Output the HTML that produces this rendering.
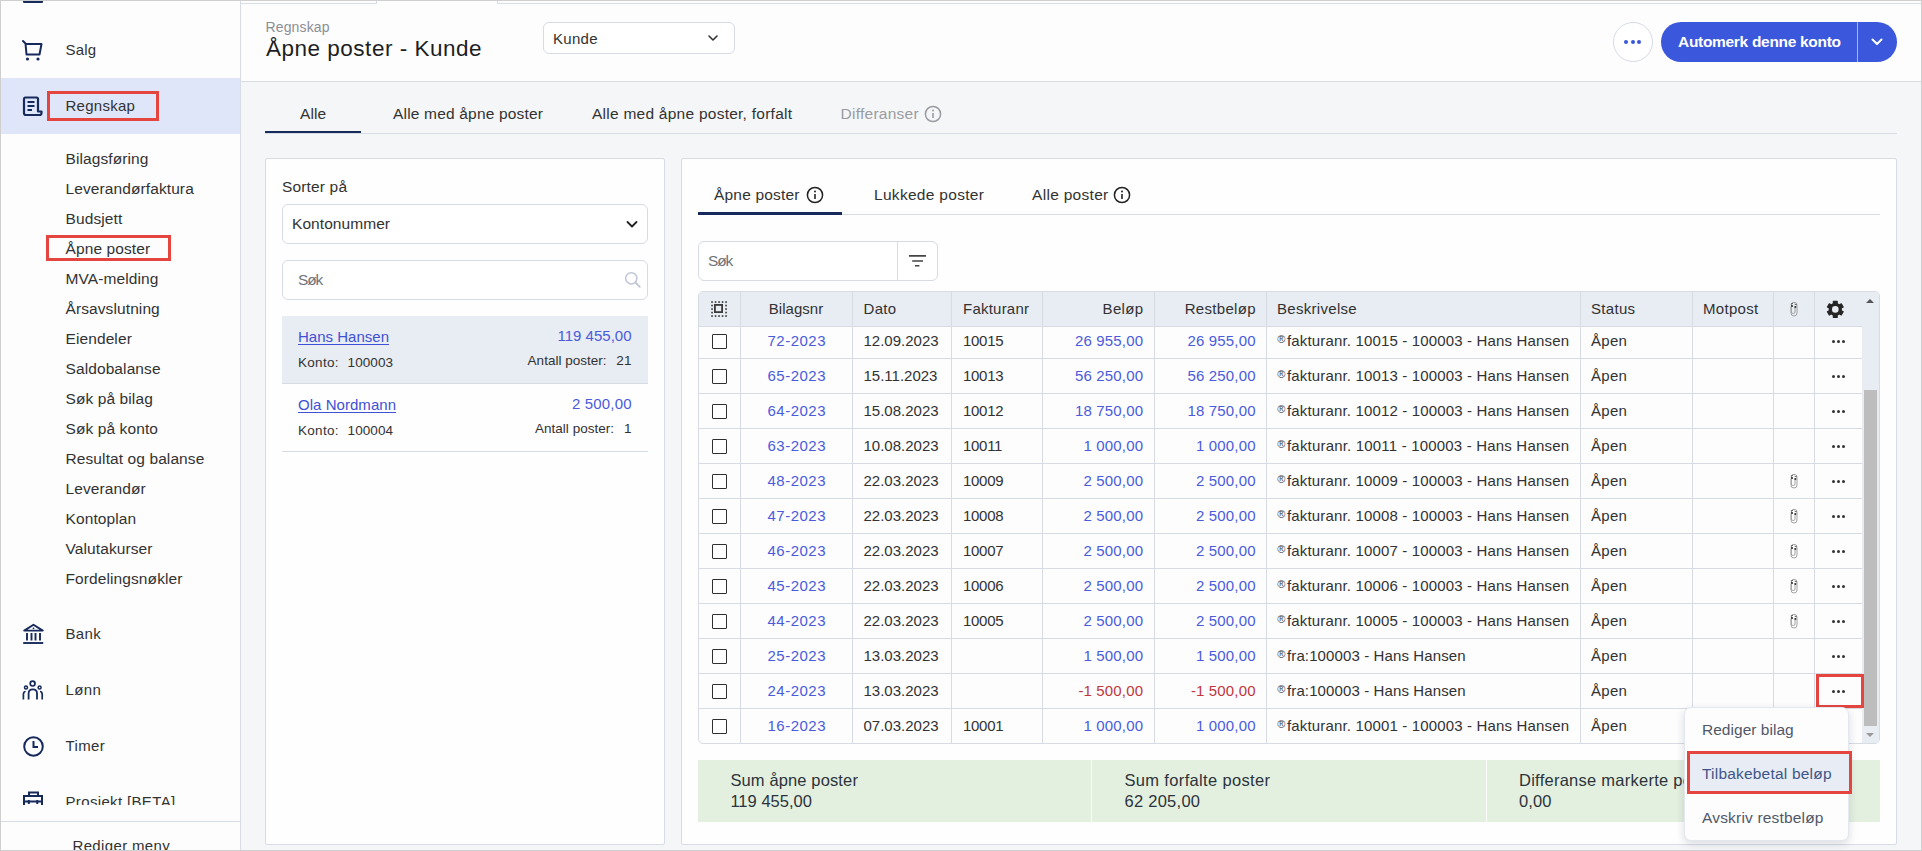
<!DOCTYPE html>
<html><head><meta charset="utf-8"><style>
html,body{margin:0;padding:0;}
body{width:1922px;height:851px;overflow:hidden;position:relative;font-family:"Liberation Sans", sans-serif;background:#f5f6f8;}
.t{position:absolute;white-space:nowrap;}
.b{position:absolute;}
</style></head><body>
<div class="b" style="left:0px;top:0px;width:1922px;height:851px;background:#f5f6f8"></div>
<div class="b" style="left:0px;top:0px;width:240px;height:851px;background:#fdfdfe"></div>
<div class="b" style="left:240px;top:0px;width:1px;height:851px;background:#d8dce4"></div>
<div class="b" style="left:241px;top:0px;width:1681px;height:81px;background:#fdfdfe"></div>
<div class="b" style="left:241px;top:81px;width:1681px;height:1px;background:#d8dce4"></div>
<div class="b" style="left:241px;top:3px;width:136px;height:1px;background:#d8dce4"></div>
<div class="b" style="left:497px;top:3px;width:1425px;height:1px;background:#d8dce4"></div>
<div class="b" style="left:376px;top:0px;width:1px;height:4px;background:#d8dce4"></div>
<div class="b" style="left:497px;top:0px;width:1px;height:4px;background:#d8dce4"></div>
<div class="b" style="left:23px;top:0px;width:20px;height:3px;background:#172a5c;border-radius:0 0 1px 1px"></div>
<div class="b" style="left:0px;top:78px;width:240px;height:56px;background:#dfe6fa"></div>
<svg class="b" style="left:21px;top:39px;" width="23" height="23" viewBox="0 0 23 23"><path d="M2 2 L4.5 4.5 L5.5 15.5 L18.5 15.5 L20.5 5 L4.8 5" fill="none" stroke="#172a5c" stroke-width="2" stroke-linejoin="round" stroke-linecap="round"/><circle cx="6.5" cy="20" r="1.6" fill="#172a5c"/><circle cx="17" cy="20" r="1.6" fill="#172a5c"/></svg>
<div class="t" style="top:42.10px;font-size:15px;line-height:15px;color:#323232;letter-spacing:0.159px;left:65.50px;">Salg</div>
<svg class="b" style="left:22px;top:95px;" width="23" height="23" viewBox="0 0 23 23"><path d="M3 2.5 H14.5 Q16 2.5 16 4 V16.5 H19.5 V18 Q19.5 20 17.5 20 H4 Q2 20 2 18 V4 Q2 2.5 3 2.5 Z" fill="none" stroke="#172a5c" stroke-width="2.2" stroke-linejoin="round"/><path d="M5.5 7 H12.5 M5.5 11 H12.5 M5.5 15 H10" stroke="#172a5c" stroke-width="2"/></svg>
<div class="t" style="top:98.00px;font-size:15px;line-height:15px;color:#323232;letter-spacing:0.265px;left:65.50px;">Regnskap</div>
<div class="b" style="left:47px;top:91px;width:112px;height:30px;border:3px solid #e4453e;box-sizing:border-box"></div>
<div class="t" style="top:151.08px;font-size:15.5px;line-height:15.5px;color:#323232;letter-spacing:0.100px;left:65.50px;">Bilagsføring</div>
<div class="t" style="top:181.08px;font-size:15.5px;line-height:15.5px;color:#323232;letter-spacing:0.100px;left:65.50px;">Leverandørfaktura</div>
<div class="t" style="top:211.08px;font-size:15.5px;line-height:15.5px;color:#323232;letter-spacing:0.100px;left:65.50px;">Budsjett</div>
<div class="t" style="top:241.08px;font-size:15.5px;line-height:15.5px;color:#323232;letter-spacing:0.100px;left:65.50px;">Åpne poster</div>
<div class="t" style="top:271.08px;font-size:15.5px;line-height:15.5px;color:#323232;letter-spacing:0.100px;left:65.50px;">MVA-melding</div>
<div class="t" style="top:301.08px;font-size:15.5px;line-height:15.5px;color:#323232;letter-spacing:0.100px;left:65.50px;">Årsavslutning</div>
<div class="t" style="top:331.08px;font-size:15.5px;line-height:15.5px;color:#323232;letter-spacing:0.100px;left:65.50px;">Eiendeler</div>
<div class="t" style="top:361.08px;font-size:15.5px;line-height:15.5px;color:#323232;letter-spacing:0.100px;left:65.50px;">Saldobalanse</div>
<div class="t" style="top:391.08px;font-size:15.5px;line-height:15.5px;color:#323232;letter-spacing:0.100px;left:65.50px;">Søk på bilag</div>
<div class="t" style="top:421.08px;font-size:15.5px;line-height:15.5px;color:#323232;letter-spacing:0.100px;left:65.50px;">Søk på konto</div>
<div class="t" style="top:451.08px;font-size:15.5px;line-height:15.5px;color:#323232;letter-spacing:0.100px;left:65.50px;">Resultat og balanse</div>
<div class="t" style="top:481.08px;font-size:15.5px;line-height:15.5px;color:#323232;letter-spacing:0.100px;left:65.50px;">Leverandør</div>
<div class="t" style="top:511.08px;font-size:15.5px;line-height:15.5px;color:#323232;letter-spacing:0.100px;left:65.50px;">Kontoplan</div>
<div class="t" style="top:541.08px;font-size:15.5px;line-height:15.5px;color:#323232;letter-spacing:0.100px;left:65.50px;">Valutakurser</div>
<div class="t" style="top:571.08px;font-size:15.5px;line-height:15.5px;color:#323232;letter-spacing:0.100px;left:65.50px;">Fordelingsnøkler</div>
<div class="b" style="left:46px;top:235px;width:125px;height:26px;border:3px solid #e4453e;box-sizing:border-box"></div>
<svg class="b" style="left:22px;top:622px;" width="23" height="23" viewBox="0 0 23 23"><path d="M2.2 8.6 L11.5 2.8 L20.8 8.6 Z" fill="none" stroke="#172a5c" stroke-width="1.9" stroke-linejoin="round"/><circle cx="11.5" cy="6.3" r="0.9" fill="#172a5c"/><path d="M5 11 V18.5 M9.5 11 V18.5 M13.5 11 V18.5 M18 11 V18.5" stroke="#172a5c" stroke-width="1.9"/><path d="M1.2 21 H21.2" stroke="#172a5c" stroke-width="1.9"/></svg>
<div class="t" style="top:625.80px;font-size:15px;line-height:15px;color:#323232;letter-spacing:0.350px;left:65.50px;">Bank</div>
<svg class="b" style="left:22px;top:680px;" width="23" height="23" viewBox="0 0 23 23"><circle cx="10.6" cy="3.6" r="2.4" fill="none" stroke="#172a5c" stroke-width="1.7"/><circle cx="4" cy="7.6" r="1.5" fill="none" stroke="#172a5c" stroke-width="1.5"/><circle cx="17.6" cy="7.6" r="1.5" fill="none" stroke="#172a5c" stroke-width="1.5"/><path d="M6.6 19.5 V13.5 Q6.6 9.3 10.8 9.3 Q15 9.3 15 13.5 V19.5" fill="none" stroke="#172a5c" stroke-width="1.8"/><path d="M1.4 19.5 V14.5 Q1.4 11.5 3.6 11.5" fill="none" stroke="#172a5c" stroke-width="1.7"/><path d="M20.2 19.5 V14.5 Q20.2 11.5 18 11.5" fill="none" stroke="#172a5c" stroke-width="1.7"/></svg>
<div class="t" style="top:681.80px;font-size:15px;line-height:15px;color:#323232;letter-spacing:0.350px;left:65.50px;">Lønn</div>
<svg class="b" style="left:22px;top:735px;" width="23" height="23" viewBox="0 0 23 23"><circle cx="11.5" cy="11.5" r="9.3" fill="none" stroke="#172a5c" stroke-width="2"/><path d="M11.5 6 V12 H16" fill="none" stroke="#172a5c" stroke-width="2"/></svg>
<div class="t" style="top:737.80px;font-size:15px;line-height:15px;color:#323232;letter-spacing:0.350px;left:65.50px;">Timer</div>
<div class="b" style="left:0;top:780px;width:240px;height:25px;overflow:hidden">
<svg class="b" style="left:22px;top:11px;" width="23" height="23" viewBox="0 0 23 23"><path d="M7 5 V1.5 H16 V5 M2 5 H20 V20 H2 Z M2 10.5 H20 M6.8 9 V13 M15.3 9 V13" fill="none" stroke="#172a5c" stroke-width="2"/></svg>
<div class="t" style="top:13.80px;font-size:15px;line-height:15px;color:#323232;letter-spacing:0.350px;left:65.50px;">Prosjekt [BETA]</div>
</div>
<div class="b" style="left:1px;top:821px;width:239px;height:1px;background:#d8dce4"></div>
<div class="t" style="top:838.30px;font-size:15px;line-height:15px;color:#323232;letter-spacing:0.350px;left:72.50px;">Rediger meny</div>
<div class="t" style="top:20.05px;font-size:14px;line-height:14px;color:#8b8e94;letter-spacing:0.137px;left:265.50px;">Regnskap</div>
<div class="t" style="top:38.15px;font-size:22.5px;line-height:22.5px;color:#1e1e1e;letter-spacing:0.506px;left:266.00px;">Åpne poster - Kunde</div>
<div class="b" style="left:543px;top:22px;width:192px;height:32px;border:1px solid #d6dbe4;border-radius:6px;background:#fff;box-sizing:border-box"></div>
<div class="t" style="top:30.50px;font-size:15px;line-height:15px;color:#323232;letter-spacing:0.300px;left:553.00px;">Kunde</div>
<svg class="b" style="left:706px;top:31px;" width="14" height="14" viewBox="0 0 14 14"><path d="M3 5 L7 9 L11 5" fill="none" stroke="#333" stroke-width="1.6" stroke-linecap="round" stroke-linejoin="round"/></svg>
<div class="b" style="left:1613px;top:22px;width:40px;height:40px;border:1px solid #d6dbe4;border-radius:50%;background:#fff;box-sizing:border-box"></div>
<div class="b" style="left:1624px;top:40px;width:4px;height:4px;background:#3b57db;border-radius:50%"></div>
<div class="b" style="left:1630.7px;top:40px;width:4px;height:4px;background:#3b57db;border-radius:50%"></div>
<div class="b" style="left:1637.4px;top:40px;width:4px;height:4px;background:#3b57db;border-radius:50%"></div>
<div class="b" style="left:1661px;top:22px;width:236px;height:40px;background:#3b57db;border-radius:20px"></div>
<div class="b" style="left:1857px;top:22px;width:1px;height:40px;background:#aab7f0"></div>
<div class="t" style="top:33.88px;font-size:15.5px;line-height:15.5px;color:#ffffff;font-weight:bold;letter-spacing:-0.305px;left:1678.00px;">Automerk denne konto</div>
<svg class="b" style="left:1870px;top:35px;" width="14" height="14" viewBox="0 0 14 14"><path d="M2.5 4.5 L7 9 L11.5 4.5" fill="none" stroke="#fff" stroke-width="2" stroke-linecap="round" stroke-linejoin="round"/></svg>
<div class="b" style="left:265px;top:133px;width:1632px;height:1px;background:#d8dce4"></div>
<div class="b" style="left:265px;top:131px;width:96px;height:2px;background:#172a5c"></div>
<div class="t" style="top:106.28px;font-size:15.5px;line-height:15.5px;color:#323232;letter-spacing:0.051px;left:300.00px;">Alle</div>
<div class="t" style="top:106.28px;font-size:15.5px;line-height:15.5px;color:#323232;letter-spacing:0.185px;left:393.00px;">Alle med åpne poster</div>
<div class="t" style="top:106.28px;font-size:15.5px;line-height:15.5px;color:#323232;letter-spacing:0.250px;left:592.00px;">Alle med åpne poster, forfalt</div>
<div class="t" style="top:106.28px;font-size:15.5px;line-height:15.5px;color:#9a9ca2;letter-spacing:0.248px;left:840.60px;">Differanser</div>
<svg class="b" style="left:924px;top:105px;" width="18" height="18" viewBox="0 0 18 18"><circle cx="9" cy="9" r="7.6" fill="none" stroke="#9a9ca2" stroke-width="1.5"/><circle cx="9" cy="5.4" r="1" fill="#9a9ca2"/><path d="M9 8 V13" stroke="#9a9ca2" stroke-width="1.6"/></svg>
<div class="b" style="left:265px;top:158px;width:400px;height:687px;background:#fefefe;border:1px solid #d8dce4;border-radius:2px;box-sizing:border-box"></div>
<div class="t" style="top:178.88px;font-size:15.5px;line-height:15.5px;color:#323232;letter-spacing:0.156px;left:282.00px;">Sorter på</div>
<div class="b" style="left:282px;top:204px;width:366px;height:40px;background:#fff;border:1px solid #d6dbe4;border-radius:6px;box-sizing:border-box"></div>
<div class="t" style="top:216.38px;font-size:15.5px;line-height:15.5px;color:#323232;letter-spacing:0.065px;left:292.00px;">Kontonummer</div>
<svg class="b" style="left:624px;top:216px;" width="16" height="16" viewBox="0 0 16 16"><path d="M3.5 6 L8 10.5 L12.5 6" fill="none" stroke="#222" stroke-width="1.8" stroke-linecap="round" stroke-linejoin="round"/></svg>
<div class="b" style="left:282px;top:260px;width:366px;height:40px;background:#fff;border:1px solid #d6dbe4;border-radius:6px;box-sizing:border-box"></div>
<div class="t" style="top:272.38px;font-size:15.5px;line-height:15.5px;color:#6f7178;letter-spacing:-1.179px;left:298.00px;">Søk</div>
<svg class="b" style="left:623.5px;top:271px;" width="18" height="18" viewBox="0 0 18 18"><circle cx="7.3" cy="7.3" r="5.6" fill="none" stroke="#c0c6d6" stroke-width="1.5"/><path d="M11.5 11.5 L15.8 15.8" stroke="#c0c6d6" stroke-width="1.8" stroke-linecap="round"/></svg>
<div class="b" style="left:282px;top:316px;width:366px;height:67px;background:#e8ecf3"></div>
<div class="b" style="left:282px;top:383px;width:366px;height:1px;background:#d6dbe4"></div>
<div class="b" style="left:282px;top:451px;width:366px;height:1px;background:#d6dbe4"></div>
<div class="t" style="top:329.00px;font-size:15px;line-height:15px;color:#3f51d6;letter-spacing:0.011px;left:298.00px;text-decoration:underline;text-underline-offset:2px">Hans Hansen</div>
<div class="t" style="top:328.20px;font-size:15px;line-height:15px;color:#4a5bdc;letter-spacing:0.005px;left:557.50px;">119 455,00</div>
<div class="t" style="top:355.57px;font-size:13.5px;line-height:13.5px;color:#323232;letter-spacing:0.300px;left:298.00px;">Konto:</div>
<div class="t" style="top:355.57px;font-size:13.5px;line-height:13.5px;color:#323232;letter-spacing:0.071px;left:347.60px;">100003</div>
<div class="t" style="top:353.57px;font-size:13.5px;line-height:13.5px;color:#323232;letter-spacing:0.016px;left:527.60px;">Antall poster:</div>
<div class="t" style="top:353.57px;font-size:13.5px;line-height:13.5px;color:#323232;letter-spacing:0.300px;left:616.18px;">21</div>
<div class="t" style="top:396.70px;font-size:15px;line-height:15px;color:#3f51d6;letter-spacing:0.041px;left:298.00px;text-decoration:underline;text-underline-offset:2px">Ola Nordmann</div>
<div class="t" style="top:395.90px;font-size:15px;line-height:15px;color:#4a5bdc;letter-spacing:0.159px;left:572.00px;">2 500,00</div>
<div class="t" style="top:423.77px;font-size:13.5px;line-height:13.5px;color:#323232;letter-spacing:0.300px;left:298.00px;">Konto:</div>
<div class="t" style="top:423.77px;font-size:13.5px;line-height:13.5px;color:#323232;letter-spacing:0.071px;left:347.60px;">100004</div>
<div class="t" style="top:421.57px;font-size:13.5px;line-height:13.5px;color:#323232;letter-spacing:0.016px;left:535.00px;">Antall poster:</div>
<div class="t" style="top:421.57px;font-size:13.5px;line-height:13.5px;color:#323232;left:623.99px;">1</div>
<div class="b" style="left:681px;top:158px;width:1216px;height:687px;background:#fefefe;border:1px solid #d8dce4;border-radius:2px;box-sizing:border-box"></div>
<div class="b" style="left:698px;top:214px;width:1182px;height:1px;background:#d8dce4"></div>
<div class="b" style="left:698px;top:212px;width:144px;height:2.5px;background:#172a5c"></div>
<div class="t" style="top:187.48px;font-size:15.5px;line-height:15.5px;color:#323232;letter-spacing:0.192px;left:714.00px;">Åpne poster</div>
<svg class="b" style="left:806px;top:186px;" width="18" height="18" viewBox="0 0 18 18"><circle cx="9" cy="9" r="7.6" fill="none" stroke="#222" stroke-width="1.5"/><circle cx="9" cy="5.4" r="1" fill="#222"/><path d="M9 8 V13" stroke="#222" stroke-width="1.6"/></svg>
<div class="t" style="top:187.48px;font-size:15.5px;line-height:15.5px;color:#323232;letter-spacing:0.300px;left:874.00px;">Lukkede poster</div>
<div class="t" style="top:187.48px;font-size:15.5px;line-height:15.5px;color:#323232;letter-spacing:0.300px;left:1032.00px;">Alle poster</div>
<svg class="b" style="left:1113px;top:186px;" width="18" height="18" viewBox="0 0 18 18"><circle cx="9" cy="9" r="7.6" fill="none" stroke="#222" stroke-width="1.5"/><circle cx="9" cy="5.4" r="1" fill="#222"/><path d="M9 8 V13" stroke="#222" stroke-width="1.6"/></svg>
<div class="b" style="left:698px;top:241px;width:240px;height:40px;background:#fff;border:1px solid #d6dbe4;border-radius:6px;box-sizing:border-box"></div>
<div class="b" style="left:897px;top:241px;width:1px;height:40px;background:#d6dbe4"></div>
<div class="t" style="top:253.38px;font-size:15.5px;line-height:15.5px;color:#6f7178;letter-spacing:-1.179px;left:708.00px;">Søk</div>
<svg class="b" style="left:907px;top:251px;" width="20" height="20" viewBox="0 0 20 20"><path d="M2 4.9 H19 M5.2 10 H16 M8 14.7 H12.4" stroke="#444" stroke-width="1.6"/></svg>
<div class="b" style="left:698px;top:291px;width:1182px;height:453px;border:1px solid #d6dbe4;border-radius:5px;box-sizing:border-box;overflow:hidden;background:#fdfdfe">
</div>
<div class="b" style="left:699px;top:292px;width:1163px;height:34px;background:#e8ecf3;border-radius:4px 0 0 0"></div>
<div class="b" style="left:1862px;top:292px;width:17px;height:451px;background:#e8ecf3"></div>
<div class="b" style="left:1864px;top:390px;width:13px;height:336px;background:#bdbdbd"></div>
<svg class="b" style="left:1865px;top:297px;" width="10" height="8" viewBox="0 0 10 8"><path d="M1 6 L5 2 L9 6 Z" fill="#555"/></svg>
<svg class="b" style="left:1865px;top:731px;" width="10" height="8" viewBox="0 0 10 8"><path d="M1 2 L5 6 L9 2 Z" fill="#999"/></svg>
<div class="b" style="left:699px;top:326px;width:1163px;height:1px;background:#d6dbe4"></div>
<div class="b" style="left:740px;top:292px;width:1px;height:451px;background:#d6dbe4"></div>
<div class="b" style="left:852px;top:292px;width:1px;height:451px;background:#d6dbe4"></div>
<div class="b" style="left:951px;top:292px;width:1px;height:451px;background:#d6dbe4"></div>
<div class="b" style="left:1042px;top:292px;width:1px;height:451px;background:#d6dbe4"></div>
<div class="b" style="left:1154px;top:292px;width:1px;height:451px;background:#d6dbe4"></div>
<div class="b" style="left:1266px;top:292px;width:1px;height:451px;background:#d6dbe4"></div>
<div class="b" style="left:1580px;top:292px;width:1px;height:451px;background:#d6dbe4"></div>
<div class="b" style="left:1692px;top:292px;width:1px;height:451px;background:#d6dbe4"></div>
<div class="b" style="left:1773px;top:292px;width:1px;height:451px;background:#d6dbe4"></div>
<div class="b" style="left:1814px;top:292px;width:1px;height:451px;background:#d6dbe4"></div>
<div class="t" style="top:301.30px;font-size:15px;line-height:15px;color:#323232;letter-spacing:0.015px;left:768.85px;">Bilagsnr</div>
<div class="t" style="top:301.30px;font-size:15px;line-height:15px;color:#323232;letter-spacing:0.300px;left:863.50px;">Dato</div>
<div class="t" style="top:301.30px;font-size:15px;line-height:15px;color:#323232;letter-spacing:0.226px;left:963.00px;">Fakturanr</div>
<div class="t" style="top:301.30px;font-size:15px;line-height:15px;color:#323232;letter-spacing:0.300px;left:1102.62px;">Beløp</div>
<div class="t" style="top:301.30px;font-size:15px;line-height:15px;color:#323232;letter-spacing:0.300px;left:1184.74px;">Restbeløp</div>
<div class="t" style="top:301.30px;font-size:15px;line-height:15px;color:#323232;letter-spacing:0.300px;left:1277.00px;">Beskrivelse</div>
<div class="t" style="top:301.30px;font-size:15px;line-height:15px;color:#323232;letter-spacing:0.300px;left:1591.00px;">Status</div>
<div class="t" style="top:301.30px;font-size:15px;line-height:15px;color:#323232;letter-spacing:0.300px;left:1703.00px;">Motpost</div>
<svg class="b" style="left:711.3px;top:301.3px;" width="16" height="16" viewBox="0 0 16 16"><rect x="0.25" y="0.25" width="1.6" height="1.6" fill="#333"/><rect x="0.25" y="14.25" width="1.6" height="1.6" fill="#333"/><rect x="3.75" y="0.25" width="1.6" height="1.6" fill="#333"/><rect x="3.75" y="14.25" width="1.6" height="1.6" fill="#333"/><rect x="7.25" y="0.25" width="1.6" height="1.6" fill="#333"/><rect x="7.25" y="14.25" width="1.6" height="1.6" fill="#333"/><rect x="10.75" y="0.25" width="1.6" height="1.6" fill="#333"/><rect x="10.75" y="14.25" width="1.6" height="1.6" fill="#333"/><rect x="14.25" y="0.25" width="1.6" height="1.6" fill="#333"/><rect x="14.25" y="14.25" width="1.6" height="1.6" fill="#333"/><rect x="0.25" y="3.75" width="1.6" height="1.6" fill="#333"/><rect x="14.25" y="3.75" width="1.6" height="1.6" fill="#333"/><rect x="0.25" y="7.25" width="1.6" height="1.6" fill="#333"/><rect x="14.25" y="7.25" width="1.6" height="1.6" fill="#333"/><rect x="0.25" y="10.75" width="1.6" height="1.6" fill="#333"/><rect x="14.25" y="10.75" width="1.6" height="1.6" fill="#333"/><rect x="3.9" y="3.9" width="7.2" height="7.2" fill="none" stroke="#3a3a3a" stroke-width="1.8"/></svg>
<svg class="b" style="left:1825px;top:299px;" width="21" height="21" viewBox="0 0 21 21"><g transform="translate(10.3,10.4)"><circle r="6.6" fill="#262626"/><rect x="-2.5" y="-8.6" width="5" height="17.2" rx="0.6" fill="#262626"/><rect x="-2.5" y="-8.6" width="5" height="17.2" rx="0.6" fill="#262626" transform="rotate(60)"/><rect x="-2.5" y="-8.6" width="5" height="17.2" rx="0.6" fill="#262626" transform="rotate(120)"/><circle r="3.3" fill="#e8ecf3"/></g></svg>
<svg class="b" style="left:1789px;top:301px;" width="10" height="16" viewBox="0 0 10 16"><path d="M2 6 V12 Q2 15 5 15 Q8 15 8 12 V4 Q8 1.3 5 1.3 Q2.3 1.3 2.3 4 V11 Q2.3 12.5 4.5 12.5 Q6 12.5 6 11 V7" fill="none" stroke="#9a9a9a" stroke-width="0.9"/><circle cx="3" cy="5" r="1.1" fill="#333"/><circle cx="6.3" cy="6" r="1.1" fill="#333"/><path d="M1.8 3 L4 2.4 M5.6 3.2 L7.8 3.8" stroke="#444" stroke-width="0.8"/></svg>
<div class="b" style="left:712px;top:333.8px;width:15.3px;height:15.3px;border:1.6px solid #2f2f2f;border-radius:1px;box-sizing:border-box;background:#fff"></div>
<div class="t" style="top:333.00px;font-size:15px;line-height:15px;color:#4a5bdc;letter-spacing:0.500px;left:767.48px;">72-2023</div>
<div class="t" style="top:333.00px;font-size:15px;line-height:15px;color:#323232;left:863.50px;">12.09.2023</div>
<div class="t" style="top:333.00px;font-size:15px;line-height:15px;color:#323232;letter-spacing:-0.300px;left:963.00px;">10015</div>
<div class="t" style="top:333.00px;font-size:15px;line-height:15px;color:#4a5bdc;letter-spacing:0.150px;left:1075.07px;">26 955,00</div>
<div class="t" style="top:333.00px;font-size:15px;line-height:15px;color:#4a5bdc;letter-spacing:0.150px;left:1187.57px;">26 955,00</div>
<div class="t" style="top:333.79px;font-size:11px;line-height:11px;color:#444;left:1277.30px;">®</div>
<div class="t" style="top:333.00px;font-size:15px;line-height:15px;color:#323232;letter-spacing:0.158px;left:1287.00px;">fakturanr. 10015 - 100003 - Hans Hansen</div>
<div class="t" style="top:333.00px;font-size:15px;line-height:15px;color:#323232;letter-spacing:0.300px;left:1591.00px;">Åpen</div>
<div class="b" style="left:1831.5px;top:339.5px;width:3px;height:3px;background:#333;border-radius:50%"></div>
<div class="b" style="left:1836.5px;top:339.5px;width:3px;height:3px;background:#333;border-radius:50%"></div>
<div class="b" style="left:1841.5px;top:339.5px;width:3px;height:3px;background:#333;border-radius:50%"></div>
<div class="b" style="left:699px;top:358px;width:1163px;height:1px;background:#d6dbe4"></div>
<div class="b" style="left:712px;top:368.8px;width:15.3px;height:15.3px;border:1.6px solid #2f2f2f;border-radius:1px;box-sizing:border-box;background:#fff"></div>
<div class="t" style="top:368.00px;font-size:15px;line-height:15px;color:#4a5bdc;letter-spacing:0.500px;left:767.48px;">65-2023</div>
<div class="t" style="top:368.00px;font-size:15px;line-height:15px;color:#323232;left:863.50px;">15.11.2023</div>
<div class="t" style="top:368.00px;font-size:15px;line-height:15px;color:#323232;letter-spacing:-0.300px;left:963.00px;">10013</div>
<div class="t" style="top:368.00px;font-size:15px;line-height:15px;color:#4a5bdc;letter-spacing:0.150px;left:1075.07px;">56 250,00</div>
<div class="t" style="top:368.00px;font-size:15px;line-height:15px;color:#4a5bdc;letter-spacing:0.150px;left:1187.57px;">56 250,00</div>
<div class="t" style="top:368.79px;font-size:11px;line-height:11px;color:#444;left:1277.30px;">®</div>
<div class="t" style="top:368.00px;font-size:15px;line-height:15px;color:#323232;letter-spacing:0.158px;left:1287.00px;">fakturanr. 10013 - 100003 - Hans Hansen</div>
<div class="t" style="top:368.00px;font-size:15px;line-height:15px;color:#323232;letter-spacing:0.300px;left:1591.00px;">Åpen</div>
<div class="b" style="left:1831.5px;top:374.5px;width:3px;height:3px;background:#333;border-radius:50%"></div>
<div class="b" style="left:1836.5px;top:374.5px;width:3px;height:3px;background:#333;border-radius:50%"></div>
<div class="b" style="left:1841.5px;top:374.5px;width:3px;height:3px;background:#333;border-radius:50%"></div>
<div class="b" style="left:699px;top:393px;width:1163px;height:1px;background:#d6dbe4"></div>
<div class="b" style="left:712px;top:403.8px;width:15.3px;height:15.3px;border:1.6px solid #2f2f2f;border-radius:1px;box-sizing:border-box;background:#fff"></div>
<div class="t" style="top:403.00px;font-size:15px;line-height:15px;color:#4a5bdc;letter-spacing:0.500px;left:767.48px;">64-2023</div>
<div class="t" style="top:403.00px;font-size:15px;line-height:15px;color:#323232;left:863.50px;">15.08.2023</div>
<div class="t" style="top:403.00px;font-size:15px;line-height:15px;color:#323232;letter-spacing:-0.300px;left:963.00px;">10012</div>
<div class="t" style="top:403.00px;font-size:15px;line-height:15px;color:#4a5bdc;letter-spacing:0.150px;left:1075.07px;">18 750,00</div>
<div class="t" style="top:403.00px;font-size:15px;line-height:15px;color:#4a5bdc;letter-spacing:0.150px;left:1187.57px;">18 750,00</div>
<div class="t" style="top:403.79px;font-size:11px;line-height:11px;color:#444;left:1277.30px;">®</div>
<div class="t" style="top:403.00px;font-size:15px;line-height:15px;color:#323232;letter-spacing:0.158px;left:1287.00px;">fakturanr. 10012 - 100003 - Hans Hansen</div>
<div class="t" style="top:403.00px;font-size:15px;line-height:15px;color:#323232;letter-spacing:0.300px;left:1591.00px;">Åpen</div>
<div class="b" style="left:1831.5px;top:409.5px;width:3px;height:3px;background:#333;border-radius:50%"></div>
<div class="b" style="left:1836.5px;top:409.5px;width:3px;height:3px;background:#333;border-radius:50%"></div>
<div class="b" style="left:1841.5px;top:409.5px;width:3px;height:3px;background:#333;border-radius:50%"></div>
<div class="b" style="left:699px;top:428px;width:1163px;height:1px;background:#d6dbe4"></div>
<div class="b" style="left:712px;top:438.8px;width:15.3px;height:15.3px;border:1.6px solid #2f2f2f;border-radius:1px;box-sizing:border-box;background:#fff"></div>
<div class="t" style="top:438.00px;font-size:15px;line-height:15px;color:#4a5bdc;letter-spacing:0.500px;left:767.48px;">63-2023</div>
<div class="t" style="top:438.00px;font-size:15px;line-height:15px;color:#323232;left:863.50px;">10.08.2023</div>
<div class="t" style="top:438.00px;font-size:15px;line-height:15px;color:#323232;letter-spacing:-0.300px;left:963.00px;">10011</div>
<div class="t" style="top:438.00px;font-size:15px;line-height:15px;color:#4a5bdc;letter-spacing:0.150px;left:1083.56px;">1 000,00</div>
<div class="t" style="top:438.00px;font-size:15px;line-height:15px;color:#4a5bdc;letter-spacing:0.150px;left:1196.06px;">1 000,00</div>
<div class="t" style="top:438.79px;font-size:11px;line-height:11px;color:#444;left:1277.30px;">®</div>
<div class="t" style="top:438.00px;font-size:15px;line-height:15px;color:#323232;letter-spacing:0.187px;left:1287.00px;">fakturanr. 10011 - 100003 - Hans Hansen</div>
<div class="t" style="top:438.00px;font-size:15px;line-height:15px;color:#323232;letter-spacing:0.300px;left:1591.00px;">Åpen</div>
<div class="b" style="left:1831.5px;top:444.5px;width:3px;height:3px;background:#333;border-radius:50%"></div>
<div class="b" style="left:1836.5px;top:444.5px;width:3px;height:3px;background:#333;border-radius:50%"></div>
<div class="b" style="left:1841.5px;top:444.5px;width:3px;height:3px;background:#333;border-radius:50%"></div>
<div class="b" style="left:699px;top:463px;width:1163px;height:1px;background:#d6dbe4"></div>
<div class="b" style="left:712px;top:473.8px;width:15.3px;height:15.3px;border:1.6px solid #2f2f2f;border-radius:1px;box-sizing:border-box;background:#fff"></div>
<div class="t" style="top:473.00px;font-size:15px;line-height:15px;color:#4a5bdc;letter-spacing:0.500px;left:767.48px;">48-2023</div>
<div class="t" style="top:473.00px;font-size:15px;line-height:15px;color:#323232;left:863.50px;">22.03.2023</div>
<div class="t" style="top:473.00px;font-size:15px;line-height:15px;color:#323232;letter-spacing:-0.300px;left:963.00px;">10009</div>
<div class="t" style="top:473.00px;font-size:15px;line-height:15px;color:#4a5bdc;letter-spacing:0.150px;left:1083.56px;">2 500,00</div>
<div class="t" style="top:473.00px;font-size:15px;line-height:15px;color:#4a5bdc;letter-spacing:0.150px;left:1196.06px;">2 500,00</div>
<div class="t" style="top:473.79px;font-size:11px;line-height:11px;color:#444;left:1277.30px;">®</div>
<div class="t" style="top:473.00px;font-size:15px;line-height:15px;color:#323232;letter-spacing:0.158px;left:1287.00px;">fakturanr. 10009 - 100003 - Hans Hansen</div>
<div class="t" style="top:473.00px;font-size:15px;line-height:15px;color:#323232;letter-spacing:0.300px;left:1591.00px;">Åpen</div>
<svg class="b" style="left:1789px;top:472.5px;" width="10" height="16" viewBox="0 0 10 16"><path d="M2 6 V12 Q2 15 5 15 Q8 15 8 12 V4 Q8 1.3 5 1.3 Q2.3 1.3 2.3 4 V11 Q2.3 12.5 4.5 12.5 Q6 12.5 6 11 V7" fill="none" stroke="#9a9a9a" stroke-width="0.9"/><circle cx="3" cy="5" r="1.1" fill="#333"/><circle cx="6.3" cy="6" r="1.1" fill="#333"/><path d="M1.8 3 L4 2.4 M5.6 3.2 L7.8 3.8" stroke="#444" stroke-width="0.8"/></svg>
<div class="b" style="left:1831.5px;top:479.5px;width:3px;height:3px;background:#333;border-radius:50%"></div>
<div class="b" style="left:1836.5px;top:479.5px;width:3px;height:3px;background:#333;border-radius:50%"></div>
<div class="b" style="left:1841.5px;top:479.5px;width:3px;height:3px;background:#333;border-radius:50%"></div>
<div class="b" style="left:699px;top:498px;width:1163px;height:1px;background:#d6dbe4"></div>
<div class="b" style="left:712px;top:508.8px;width:15.3px;height:15.3px;border:1.6px solid #2f2f2f;border-radius:1px;box-sizing:border-box;background:#fff"></div>
<div class="t" style="top:508.00px;font-size:15px;line-height:15px;color:#4a5bdc;letter-spacing:0.500px;left:767.48px;">47-2023</div>
<div class="t" style="top:508.00px;font-size:15px;line-height:15px;color:#323232;left:863.50px;">22.03.2023</div>
<div class="t" style="top:508.00px;font-size:15px;line-height:15px;color:#323232;letter-spacing:-0.300px;left:963.00px;">10008</div>
<div class="t" style="top:508.00px;font-size:15px;line-height:15px;color:#4a5bdc;letter-spacing:0.150px;left:1083.56px;">2 500,00</div>
<div class="t" style="top:508.00px;font-size:15px;line-height:15px;color:#4a5bdc;letter-spacing:0.150px;left:1196.06px;">2 500,00</div>
<div class="t" style="top:508.79px;font-size:11px;line-height:11px;color:#444;left:1277.30px;">®</div>
<div class="t" style="top:508.00px;font-size:15px;line-height:15px;color:#323232;letter-spacing:0.158px;left:1287.00px;">fakturanr. 10008 - 100003 - Hans Hansen</div>
<div class="t" style="top:508.00px;font-size:15px;line-height:15px;color:#323232;letter-spacing:0.300px;left:1591.00px;">Åpen</div>
<svg class="b" style="left:1789px;top:507.5px;" width="10" height="16" viewBox="0 0 10 16"><path d="M2 6 V12 Q2 15 5 15 Q8 15 8 12 V4 Q8 1.3 5 1.3 Q2.3 1.3 2.3 4 V11 Q2.3 12.5 4.5 12.5 Q6 12.5 6 11 V7" fill="none" stroke="#9a9a9a" stroke-width="0.9"/><circle cx="3" cy="5" r="1.1" fill="#333"/><circle cx="6.3" cy="6" r="1.1" fill="#333"/><path d="M1.8 3 L4 2.4 M5.6 3.2 L7.8 3.8" stroke="#444" stroke-width="0.8"/></svg>
<div class="b" style="left:1831.5px;top:514.5px;width:3px;height:3px;background:#333;border-radius:50%"></div>
<div class="b" style="left:1836.5px;top:514.5px;width:3px;height:3px;background:#333;border-radius:50%"></div>
<div class="b" style="left:1841.5px;top:514.5px;width:3px;height:3px;background:#333;border-radius:50%"></div>
<div class="b" style="left:699px;top:533px;width:1163px;height:1px;background:#d6dbe4"></div>
<div class="b" style="left:712px;top:543.8px;width:15.3px;height:15.3px;border:1.6px solid #2f2f2f;border-radius:1px;box-sizing:border-box;background:#fff"></div>
<div class="t" style="top:543.00px;font-size:15px;line-height:15px;color:#4a5bdc;letter-spacing:0.500px;left:767.48px;">46-2023</div>
<div class="t" style="top:543.00px;font-size:15px;line-height:15px;color:#323232;left:863.50px;">22.03.2023</div>
<div class="t" style="top:543.00px;font-size:15px;line-height:15px;color:#323232;letter-spacing:-0.300px;left:963.00px;">10007</div>
<div class="t" style="top:543.00px;font-size:15px;line-height:15px;color:#4a5bdc;letter-spacing:0.150px;left:1083.56px;">2 500,00</div>
<div class="t" style="top:543.00px;font-size:15px;line-height:15px;color:#4a5bdc;letter-spacing:0.150px;left:1196.06px;">2 500,00</div>
<div class="t" style="top:543.79px;font-size:11px;line-height:11px;color:#444;left:1277.30px;">®</div>
<div class="t" style="top:543.00px;font-size:15px;line-height:15px;color:#323232;letter-spacing:0.158px;left:1287.00px;">fakturanr. 10007 - 100003 - Hans Hansen</div>
<div class="t" style="top:543.00px;font-size:15px;line-height:15px;color:#323232;letter-spacing:0.300px;left:1591.00px;">Åpen</div>
<svg class="b" style="left:1789px;top:542.5px;" width="10" height="16" viewBox="0 0 10 16"><path d="M2 6 V12 Q2 15 5 15 Q8 15 8 12 V4 Q8 1.3 5 1.3 Q2.3 1.3 2.3 4 V11 Q2.3 12.5 4.5 12.5 Q6 12.5 6 11 V7" fill="none" stroke="#9a9a9a" stroke-width="0.9"/><circle cx="3" cy="5" r="1.1" fill="#333"/><circle cx="6.3" cy="6" r="1.1" fill="#333"/><path d="M1.8 3 L4 2.4 M5.6 3.2 L7.8 3.8" stroke="#444" stroke-width="0.8"/></svg>
<div class="b" style="left:1831.5px;top:549.5px;width:3px;height:3px;background:#333;border-radius:50%"></div>
<div class="b" style="left:1836.5px;top:549.5px;width:3px;height:3px;background:#333;border-radius:50%"></div>
<div class="b" style="left:1841.5px;top:549.5px;width:3px;height:3px;background:#333;border-radius:50%"></div>
<div class="b" style="left:699px;top:568px;width:1163px;height:1px;background:#d6dbe4"></div>
<div class="b" style="left:712px;top:578.8px;width:15.3px;height:15.3px;border:1.6px solid #2f2f2f;border-radius:1px;box-sizing:border-box;background:#fff"></div>
<div class="t" style="top:578.00px;font-size:15px;line-height:15px;color:#4a5bdc;letter-spacing:0.500px;left:767.48px;">45-2023</div>
<div class="t" style="top:578.00px;font-size:15px;line-height:15px;color:#323232;left:863.50px;">22.03.2023</div>
<div class="t" style="top:578.00px;font-size:15px;line-height:15px;color:#323232;letter-spacing:-0.300px;left:963.00px;">10006</div>
<div class="t" style="top:578.00px;font-size:15px;line-height:15px;color:#4a5bdc;letter-spacing:0.150px;left:1083.56px;">2 500,00</div>
<div class="t" style="top:578.00px;font-size:15px;line-height:15px;color:#4a5bdc;letter-spacing:0.150px;left:1196.06px;">2 500,00</div>
<div class="t" style="top:578.79px;font-size:11px;line-height:11px;color:#444;left:1277.30px;">®</div>
<div class="t" style="top:578.00px;font-size:15px;line-height:15px;color:#323232;letter-spacing:0.158px;left:1287.00px;">fakturanr. 10006 - 100003 - Hans Hansen</div>
<div class="t" style="top:578.00px;font-size:15px;line-height:15px;color:#323232;letter-spacing:0.300px;left:1591.00px;">Åpen</div>
<svg class="b" style="left:1789px;top:577.5px;" width="10" height="16" viewBox="0 0 10 16"><path d="M2 6 V12 Q2 15 5 15 Q8 15 8 12 V4 Q8 1.3 5 1.3 Q2.3 1.3 2.3 4 V11 Q2.3 12.5 4.5 12.5 Q6 12.5 6 11 V7" fill="none" stroke="#9a9a9a" stroke-width="0.9"/><circle cx="3" cy="5" r="1.1" fill="#333"/><circle cx="6.3" cy="6" r="1.1" fill="#333"/><path d="M1.8 3 L4 2.4 M5.6 3.2 L7.8 3.8" stroke="#444" stroke-width="0.8"/></svg>
<div class="b" style="left:1831.5px;top:584.5px;width:3px;height:3px;background:#333;border-radius:50%"></div>
<div class="b" style="left:1836.5px;top:584.5px;width:3px;height:3px;background:#333;border-radius:50%"></div>
<div class="b" style="left:1841.5px;top:584.5px;width:3px;height:3px;background:#333;border-radius:50%"></div>
<div class="b" style="left:699px;top:603px;width:1163px;height:1px;background:#d6dbe4"></div>
<div class="b" style="left:712px;top:613.8px;width:15.3px;height:15.3px;border:1.6px solid #2f2f2f;border-radius:1px;box-sizing:border-box;background:#fff"></div>
<div class="t" style="top:613.00px;font-size:15px;line-height:15px;color:#4a5bdc;letter-spacing:0.500px;left:767.48px;">44-2023</div>
<div class="t" style="top:613.00px;font-size:15px;line-height:15px;color:#323232;left:863.50px;">22.03.2023</div>
<div class="t" style="top:613.00px;font-size:15px;line-height:15px;color:#323232;letter-spacing:-0.300px;left:963.00px;">10005</div>
<div class="t" style="top:613.00px;font-size:15px;line-height:15px;color:#4a5bdc;letter-spacing:0.150px;left:1083.56px;">2 500,00</div>
<div class="t" style="top:613.00px;font-size:15px;line-height:15px;color:#4a5bdc;letter-spacing:0.150px;left:1196.06px;">2 500,00</div>
<div class="t" style="top:613.79px;font-size:11px;line-height:11px;color:#444;left:1277.30px;">®</div>
<div class="t" style="top:613.00px;font-size:15px;line-height:15px;color:#323232;letter-spacing:0.158px;left:1287.00px;">fakturanr. 10005 - 100003 - Hans Hansen</div>
<div class="t" style="top:613.00px;font-size:15px;line-height:15px;color:#323232;letter-spacing:0.300px;left:1591.00px;">Åpen</div>
<svg class="b" style="left:1789px;top:612.5px;" width="10" height="16" viewBox="0 0 10 16"><path d="M2 6 V12 Q2 15 5 15 Q8 15 8 12 V4 Q8 1.3 5 1.3 Q2.3 1.3 2.3 4 V11 Q2.3 12.5 4.5 12.5 Q6 12.5 6 11 V7" fill="none" stroke="#9a9a9a" stroke-width="0.9"/><circle cx="3" cy="5" r="1.1" fill="#333"/><circle cx="6.3" cy="6" r="1.1" fill="#333"/><path d="M1.8 3 L4 2.4 M5.6 3.2 L7.8 3.8" stroke="#444" stroke-width="0.8"/></svg>
<div class="b" style="left:1831.5px;top:619.5px;width:3px;height:3px;background:#333;border-radius:50%"></div>
<div class="b" style="left:1836.5px;top:619.5px;width:3px;height:3px;background:#333;border-radius:50%"></div>
<div class="b" style="left:1841.5px;top:619.5px;width:3px;height:3px;background:#333;border-radius:50%"></div>
<div class="b" style="left:699px;top:638px;width:1163px;height:1px;background:#d6dbe4"></div>
<div class="b" style="left:712px;top:648.8px;width:15.3px;height:15.3px;border:1.6px solid #2f2f2f;border-radius:1px;box-sizing:border-box;background:#fff"></div>
<div class="t" style="top:648.00px;font-size:15px;line-height:15px;color:#4a5bdc;letter-spacing:0.500px;left:767.48px;">25-2023</div>
<div class="t" style="top:648.00px;font-size:15px;line-height:15px;color:#323232;left:863.50px;">13.03.2023</div>
<div class="t" style="top:648.00px;font-size:15px;line-height:15px;color:#4a5bdc;letter-spacing:0.150px;left:1083.56px;">1 500,00</div>
<div class="t" style="top:648.00px;font-size:15px;line-height:15px;color:#4a5bdc;letter-spacing:0.150px;left:1196.06px;">1 500,00</div>
<div class="t" style="top:648.79px;font-size:11px;line-height:11px;color:#444;left:1277.30px;">®</div>
<div class="t" style="top:648.00px;font-size:15px;line-height:15px;color:#323232;letter-spacing:0.116px;left:1287.00px;">fra:100003 - Hans Hansen</div>
<div class="t" style="top:648.00px;font-size:15px;line-height:15px;color:#323232;letter-spacing:0.300px;left:1591.00px;">Åpen</div>
<div class="b" style="left:1831.5px;top:654.5px;width:3px;height:3px;background:#333;border-radius:50%"></div>
<div class="b" style="left:1836.5px;top:654.5px;width:3px;height:3px;background:#333;border-radius:50%"></div>
<div class="b" style="left:1841.5px;top:654.5px;width:3px;height:3px;background:#333;border-radius:50%"></div>
<div class="b" style="left:699px;top:673px;width:1163px;height:1px;background:#d6dbe4"></div>
<div class="b" style="left:712px;top:683.8px;width:15.3px;height:15.3px;border:1.6px solid #2f2f2f;border-radius:1px;box-sizing:border-box;background:#fff"></div>
<div class="t" style="top:683.00px;font-size:15px;line-height:15px;color:#4a5bdc;letter-spacing:0.500px;left:767.48px;">24-2023</div>
<div class="t" style="top:683.00px;font-size:15px;line-height:15px;color:#323232;left:863.50px;">13.03.2023</div>
<div class="t" style="top:683.00px;font-size:15px;line-height:15px;color:#c0363c;letter-spacing:0.150px;left:1078.42px;">-1 500,00</div>
<div class="t" style="top:683.00px;font-size:15px;line-height:15px;color:#c0363c;letter-spacing:0.150px;left:1190.92px;">-1 500,00</div>
<div class="t" style="top:683.79px;font-size:11px;line-height:11px;color:#444;left:1277.30px;">®</div>
<div class="t" style="top:683.00px;font-size:15px;line-height:15px;color:#323232;letter-spacing:0.116px;left:1287.00px;">fra:100003 - Hans Hansen</div>
<div class="t" style="top:683.00px;font-size:15px;line-height:15px;color:#323232;letter-spacing:0.300px;left:1591.00px;">Åpen</div>
<div class="b" style="left:1831.5px;top:689.5px;width:3px;height:3px;background:#333;border-radius:50%"></div>
<div class="b" style="left:1836.5px;top:689.5px;width:3px;height:3px;background:#333;border-radius:50%"></div>
<div class="b" style="left:1841.5px;top:689.5px;width:3px;height:3px;background:#333;border-radius:50%"></div>
<div class="b" style="left:699px;top:708px;width:1163px;height:1px;background:#d6dbe4"></div>
<div class="b" style="left:712px;top:718.8px;width:15.3px;height:15.3px;border:1.6px solid #2f2f2f;border-radius:1px;box-sizing:border-box;background:#fff"></div>
<div class="t" style="top:718.00px;font-size:15px;line-height:15px;color:#4a5bdc;letter-spacing:0.500px;left:767.48px;">16-2023</div>
<div class="t" style="top:718.00px;font-size:15px;line-height:15px;color:#323232;left:863.50px;">07.03.2023</div>
<div class="t" style="top:718.00px;font-size:15px;line-height:15px;color:#323232;letter-spacing:-0.300px;left:963.00px;">10001</div>
<div class="t" style="top:718.00px;font-size:15px;line-height:15px;color:#4a5bdc;letter-spacing:0.150px;left:1083.56px;">1 000,00</div>
<div class="t" style="top:718.00px;font-size:15px;line-height:15px;color:#4a5bdc;letter-spacing:0.150px;left:1196.06px;">1 000,00</div>
<div class="t" style="top:718.79px;font-size:11px;line-height:11px;color:#444;left:1277.30px;">®</div>
<div class="t" style="top:718.00px;font-size:15px;line-height:15px;color:#323232;letter-spacing:0.158px;left:1287.00px;">fakturanr. 10001 - 100003 - Hans Hansen</div>
<div class="t" style="top:718.00px;font-size:15px;line-height:15px;color:#323232;letter-spacing:0.300px;left:1591.00px;">Åpen</div>
<div class="b" style="left:1831.5px;top:724.5px;width:3px;height:3px;background:#333;border-radius:50%"></div>
<div class="b" style="left:1836.5px;top:724.5px;width:3px;height:3px;background:#333;border-radius:50%"></div>
<div class="b" style="left:1841.5px;top:724.5px;width:3px;height:3px;background:#333;border-radius:50%"></div>
<div class="b" style="left:1816px;top:674px;width:48px;height:34px;border:3px solid #e4453e;box-sizing:border-box"></div>
<div class="b" style="left:698px;top:760px;width:1182px;height:62px;background:#e3f0df"></div>
<div class="b" style="left:1091px;top:760px;width:1px;height:62px;background:#fdfdfe"></div>
<div class="b" style="left:1486px;top:760px;width:1px;height:62px;background:#fdfdfe"></div>
<div class="t" style="top:771.93px;font-size:16.5px;line-height:16.5px;color:#2d333c;letter-spacing:0.131px;left:730.40px;">Sum åpne poster</div>
<div class="t" style="top:792.53px;font-size:16.5px;line-height:16.5px;color:#2d333c;letter-spacing:0.027px;left:730.40px;">119 455,00</div>
<div class="t" style="top:771.93px;font-size:16.5px;line-height:16.5px;color:#2d333c;letter-spacing:0.339px;left:1124.50px;">Sum forfalte poster</div>
<div class="t" style="top:792.53px;font-size:16.5px;line-height:16.5px;color:#2d333c;letter-spacing:0.262px;left:1124.50px;">62 205,00</div>
<div class="b" style="left:0;top:0;width:1683.5px;height:851px;overflow:hidden">
<div class="t" style="top:771.93px;font-size:16.5px;line-height:16.5px;color:#2d333c;letter-spacing:0.260px;left:1519.00px;">Differanse markerte poster</div>
</div>
<div class="t" style="top:792.53px;font-size:16.5px;line-height:16.5px;color:#2d333c;letter-spacing:0.129px;left:1519.00px;">0,00</div>
<div class="b" style="left:1684px;top:707px;width:165px;height:134px;background:#fdfdfe;border:1px solid #e3e7ee;border-radius:7px;box-sizing:border-box;box-shadow:0 3px 8px rgba(30,40,70,0.16)"></div>
<div class="t" style="top:722.28px;font-size:15.5px;line-height:15.5px;color:#505868;letter-spacing:0.030px;left:1702.00px;">Rediger bilag</div>
<div class="b" style="left:1687px;top:751px;width:165px;height:43px;background:#e8ecf5;border:3px solid #e4453e;box-sizing:border-box"></div>
<div class="t" style="top:765.68px;font-size:15.5px;line-height:15.5px;color:#3e5687;letter-spacing:0.201px;left:1702.00px;">Tilbakebetal beløp</div>
<div class="t" style="top:810.28px;font-size:15.5px;line-height:15.5px;color:#505868;letter-spacing:0.182px;left:1702.00px;">Avskriv restbeløp</div>
<div class="b" style="left:0px;top:0px;width:1922px;height:1px;background:#cfcfcf"></div>
<div class="b" style="left:0px;top:850px;width:1922px;height:1px;background:#cfcfcf"></div>
<div class="b" style="left:0px;top:0px;width:1px;height:851px;background:#cfcfcf"></div>
<div class="b" style="left:1921px;top:0px;width:1px;height:851px;background:#cfcfcf"></div>
</body></html>
